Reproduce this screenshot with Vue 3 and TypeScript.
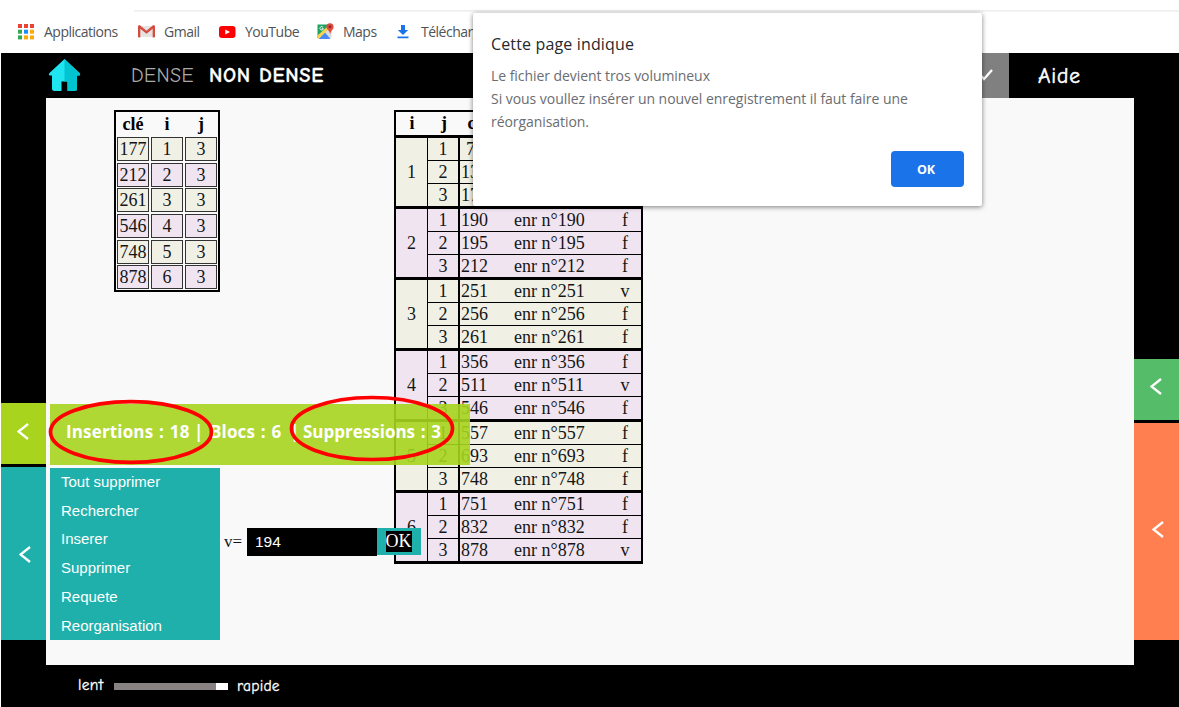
<script setup lang="ts">
interface IndexRow { key: number; block: number; slot: number }
interface RecordRow { key: number; deleted: boolean }

const indexRows: IndexRow[] = [177, 212, 261, 546, 748, 878].map((key, n) => ({ key, block: n + 1, slot: 3 }))

const deletedKeys = [251, 511, 878]
const blocks: RecordRow[][] = [
  [75, 130, 177],
  [190, 195, 212],
  [251, 256, 261],
  [356, 511, 546],
  [557, 693, 748],
  [751, 832, 878],
].map((keys) => keys.map((key) => ({ key, deleted: deletedKeys.includes(key) })))

const actions: string[] = ['Tout supprimer', 'Rechercher', 'Inserer', 'Supprimer', 'Requete', 'Reorganisation']
const appColors: string[] = ['#ea4335', '#ea4335', '#ea4335', '#34a853', '#1a8cff', '#fbab05', '#34a853', '#fbab05', '#fbab05']
</script>

<template>
  <div class="window">
    <header class="bookmarks">
      <div class="bm apps">
        <svg width="16" height="16" viewBox="0 0 16 16">
          <rect v-for="(c, n) in appColors" :key="n" :x="(n % 3) * 6" :y="Math.floor(n / 3) * 5.7" width="4" height="4" :fill="c" />
        </svg>
        <span>Applications</span>
      </div>
      <div class="bm gmail">
        <svg width="17" height="13" viewBox="0 0 17 13">
          <path d="M1 1h15v11H1z" fill="#e6e4e3" />
          <path d="M0 1.5Q0 0 1.6 0L8.5 5.7 15.4 0Q17 0 17 1.5V11.4Q17 12.4 16 12.4H14.7V3.8L8.5 8.8 2.3 3.8V12.4H1Q0 12.4 0 11.4z" fill="#d54b3d" />
        </svg>
        <span>Gmail</span>
      </div>
      <div class="bm youtube">
        <svg width="17" height="12" viewBox="0 0 17 12">
          <rect width="16.5" height="12" rx="3" fill="#f00" />
          <path d="M6.3 3.4L11 6 6.3 8.6z" fill="#fff" />
        </svg>
        <span>YouTube</span>
      </div>
      <div class="bm maps">
        <svg width="17" height="17" viewBox="0 0 17 17">
          <path d="M1 2h13v13H1z" fill="#d9dcdf" />
          <path d="M.5 1.5H11L10 7 .5 15.5z" fill="#1fa463" />
          <path d="M1.500 16L8 9.500l5.500 6.500z" fill="#4a89f3" />
          <path d="M.5 12.500L10 4l1.600 2L2 15.500H.5z" fill="#fcd24c" />
          <path d="M9 9l5.500 6V6z" fill="#d9dcdf" />
          <path d="M9.400 3.800a3.600 3.600 0 0 1 7.200 0c0 2.500-2.600 3.600-3.400 7.400C12.400 7.400 9.400 6.300 9.400 3.800z" fill="#e04a3f" />
          <circle cx="13" cy="3.700" r="1.300" fill="#8c1d18" />
          <path d="M6 4.300a1.700 1.700 0 1 0 .3 1.400H4.800" fill="none" stroke="#fff" stroke-width=".9" />
        </svg>
        <span>Maps</span>
      </div>
      <div class="bm download">
        <svg width="12" height="14" viewBox="0 0 12 14">
          <path d="M4 0h4v5h3.200L6 10 .8 5H4zM.5 11.500h11v1.700H.5z" fill="#1a73e8" />
        </svg>
        <span>Télécharger</span>
      </div>
    </header>

    <div class="app">
      <nav class="topbar">
        <svg class="home" width="33" height="33" viewBox="0 0 33 33">
          <path d="M16.500 0L31.500 14Q33 16 31 16.500H29V29.500Q29 32 26.500 32H19.500V22.500H13.500V32H6.500Q4 32 4 29.500V16.500H2Q0 16 1.500 14z" fill="#1fe5f0" />
          <path d="M16.500 0L31.500 14Q33 16 31 16.500H29V29.500Q29 32 26.500 32H19.500V22.500H16.500z" fill="#00c5d0" />
        </svg>
        <span class="dense">DENSE</span>
        <span class="non-dense">NON DENSE</span>
        <span class="toggle">
          <svg width="18" height="12" viewBox="0 0 18 12"><path d="M1 1l8 9 8-9" /></svg>
        </span>
        <span class="help">Aide</span>
      </nav>

      <div class="middle">
        <aside class="rail left">
          <div class="tab lime"><svg width="12" height="17" viewBox="0 0 12 17"><path d="M11 1L1.500 8.500 11 16" /></svg></div>
          <div class="tab teal"><svg width="12" height="17" viewBox="0 0 12 17"><path d="M11 1L1.500 8.500 11 16" /></svg></div>
        </aside>

        <main class="canvas">
          <div class="index-table">
            <b>clé</b><b>i</b><b>j</b>
            <template v-for="r in indexRows" :key="r.key">
              <span class="cell" :class="{ alt: r.block % 2 === 0 }">{{ r.key }}</span>
              <span class="cell" :class="{ alt: r.block % 2 === 0 }">{{ r.block }}</span>
              <span class="cell" :class="{ alt: r.block % 2 === 0 }">{{ r.slot }}</span>
            </template>
          </div>

          <div class="data-table">
            <div class="data-head"><b>i</b><b>j</b><b class="key-head">clé</b></div>
            <div v-for="(rows, n) in blocks" :key="n" class="block" :class="{ alt: n % 2 === 1 }">
              <div class="block-no">{{ n + 1 }}</div>
              <div class="records">
                <div v-for="(r, k) in rows" :key="r.key" class="record">
                  <span class="slot">{{ k + 1 }}</span>
                  <span class="key" :class="{ short: r.key < 100 }">{{ r.key }}</span>
                  <span class="info">enr n°{{ r.key }}</span>
                  <span class="flag">{{ r.deleted ? 'v' : 'f' }}</span>
                </div>
              </div>
            </div>
          </div>

          <div class="stats">
            <span class="s-ins">Insertions : 18</span><span class="s-bar">|</span>
            <span class="s-blocs">Blocs : 6</span><span class="s-bar2">|</span>
            <span class="s-sup">Suppressions : 3</span>
          </div>

          <div class="actions">
            <ul>
              <li v-for="a in actions" :key="a">{{ a }}</li>
            </ul>
            <div class="prompt">
              <span class="v">v=</span><span class="field">194</span><span class="go"><span>OK</span></span>
            </div>
          </div>
        </main>

        <aside class="rail right">
          <div class="tab green"><svg width="12" height="17" viewBox="0 0 12 17"><path d="M11 1L1.500 8.500 11 16" /></svg></div>
          <div class="tab coral"><svg width="12" height="17" viewBox="0 0 12 17"><path d="M11 1L1.500 8.500 11 16" /></svg></div>
        </aside>
      </div>

      <footer class="speed">
        <span class="slow">lent</span>
        <span class="track"><i /></span>
        <span class="fast">rapide</span>
      </footer>
    </div>

    <svg class="marks" width="420" height="80" viewBox="0 0 420 80">
      <ellipse cx="91" cy="42" rx="80.500" ry="30.300" />
      <ellipse cx="332" cy="38.500" rx="80.500" ry="31" />
    </svg>

    <section class="dialog">
      <h1>Cette page indique</h1>
      <p class="l1">Le fichier devient tros volumineux</p>
      <p class="l2">Si vous voullez insérer un nouvel enregistrement il faut faire une</p>
      <p class="l3">réorganisation.</p>
      <button>OK</button>
    </section>
  </div>
</template>

<style>
body { margin: 0; overflow: hidden; background: #fff; }
</style>

<style scoped>
* { box-sizing: border-box; }
.window { position: relative; width: 1179px; height: 707px; overflow: hidden; display: flex; flex-direction: column; font-family: "Segoe UI", "Open Sans", "Noto Sans", sans-serif; }
span, b, li, h1, p { white-space: nowrap; }
svg { display: block; flex: none; }

.bookmarks { height: 53px; flex: none; display: flex; padding: 11px 0 0 18px; background: linear-gradient(#ececee, #f6f6f6) 134px 10px / 100% 2px no-repeat #fff; color: #505357; font-size: 14px; letter-spacing: -.5px; }
.bm { display: flex; align-items: center; height: 41px; flex: none; }
.apps { width: 120px; gap: 10px; }
.gmail { width: 81px; gap: 9px; }
.youtube { width: 98px; gap: 9px; }
.maps { width: 80px; gap: 9px; }
.download { gap: 12px; }

.app { flex: 1; margin-left: 1px; background: #000; display: flex; flex-direction: column; }
.topbar { height: 45px; flex: none; display: flex; align-items: center; padding-left: 47px; color: #fff; font-family: "Comic Sans MS", "Comic Neue", Lato, "Open Sans", sans-serif; font-size: 20px; }
.dense { width: 78px; margin-left: 50px; color: #aaa; letter-spacing: .4px; }
.non-dense { width: 734px; font-weight: 700; letter-spacing: .7px; font-size: 20.500px; -webkit-text-stroke: .3px #fff; }
.toggle { width: 66px; height: 45px; background: #808080; display: flex; align-items: center; justify-content: center; padding: 0 0 1px 16px; }
.toggle path, .tab path { fill: none; stroke: #fff; stroke-width: 2.300; }
.help { margin-left: 29px; font-size: 21.500px; letter-spacing: .8px; -webkit-text-stroke: .5px #fff; }

.middle { height: 567px; flex: none; display: flex; }
.rail { display: flex; flex-direction: column; }
.left { width: 45px; padding-top: 305px; gap: 3px; }
.right { width: 45px; padding-top: 261px; gap: 3px; }
.tab { display: flex; align-items: center; justify-content: center; }
.lime { height: 61px; background: #a9d41e; padding: 0 1px 5px 0; }
.teal { height: 173px; background: #20b0ab; padding: 1px 0 0 2px; }
.green { height: 61px; background: #55bd69; padding: 0 1px 6px 0; }
.coral { height: 217px; background: #ff7f50; padding: 0 0 4px 3px; }

.canvas { width: 1088px; flex: none; background: #f9f9f9; position: relative; font-family: "Liberation Serif", serif; font-size: 18px; color: #151515; padding: 12px 0 0 68px; }
.index-table { width: 106px; height: 182px; border: 2px solid #000; display: grid; grid-template-columns: repeat(3, 32px); grid-template-rows: 22.300px; grid-auto-rows: 24px; column-gap: 2px; row-gap: 1.700px; padding: 1px; line-height: 22px; text-align: center; }
.index-table b { line-height: 23px; color: #000; }
.cell { border: 1px solid #333; background: #f0f0e4; }
.alt, .cell.alt { background: #f0e4f0; }

.data-table { position: absolute; left: 348px; top: 12px; width: 249px; border: 2px solid #000; border-bottom: 0; line-height: 22px; }
.data-head { height: 26px; border-bottom: 3px solid #000; display: flex; text-align: center; color: #000; }
.data-head b { width: 32px; }
.data-head .key-head { width: 36px; }
.block { height: 71px; border-bottom: 3px solid #000; display: flex; background: #f0f0e4; }
.block.alt { background: #f0e4f0; }
.block-no { width: 32px; border-right: 1.500px solid #000; line-height: 69px; text-align: center; }
.records { flex: 1; display: flex; flex-direction: column; }
.record { flex: 1; display: flex; }
.record + .record { border-top: 1px solid #000; }
.slot { width: 32px; border-right: 2px solid #000; text-align: center; }
.key { width: 54px; padding-left: 1px; }
.key.short { padding-left: 6px; }
.info { width: 107px; }
.flag { width: 10px; text-align: center; margin-left: -1px; }

.stats { position: absolute; left: 4px; top: 306px; width: 420px; height: 61px; background: rgba(166, 212, 30, .9); color: #fff; display: flex; align-items: center; padding: 0 0 6px 16px; font: 700 17px "Trebuchet MS", "Open Sans", sans-serif; }
.s-ins { width: 128px; letter-spacing: .15px; word-spacing: 1.200px; }
.s-bar { width: 16px; }
.s-blocs { width: 80px; letter-spacing: .15px; word-spacing: 1.200px; }
.s-bar2 { width: 13px; }
.s-sup { word-spacing: 1.200px; }

.actions { position: absolute; left: 4px; top: 370px; display: flex; }
ul { list-style: none; margin: 0; width: 170px; height: 172px; background: #20b0ab; color: #fff; padding: 0 0 0 11px; font: 15px/28.700px "Liberation Sans", Arial, sans-serif; }
.prompt { display: flex; align-items: center; height: 28px; margin-top: 60px; }
.v { width: 27px; padding: 0 0 1px 4px; font-size: 17px; }
.field { width: 130px; height: 28px; background: #000; color: #fff; font: 15.500px/28px "Liberation Sans", Arial, sans-serif; padding-left: 8px; }
.go { width: 44px; height: 27px; background: #20b0ab; display: flex; align-items: center; justify-content: center; margin-top: -1px; padding-right: 1px; }
.go span { background: #000; color: #fff; font-size: 18px; line-height: 21px; }

.speed { flex: 1; display: flex; align-items: center; color: #fff; font-family: "Comic Sans MS", "Comic Neue", Lato, "Open Sans", sans-serif; font-size: 15.500px; padding-left: 77px; -webkit-text-stroke: .3px #fff; }
.slow { width: 36px; letter-spacing: .3px; padding-bottom: 2px; }
.fast { letter-spacing: .2px; }
.track { width: 114px; height: 7px; background: #898282; display: flex; justify-content: flex-end; margin-right: 9px; }
.track i { width: 12px; background: #fff; }

.marks { position: absolute; left: 40px; top: 390px; fill: none; stroke: #f00; stroke-width: 3.700; }

.dialog { position: absolute; left: 473px; top: 13px; width: 508.500px; height: 192.500px; background: #fff; border-radius: 2px; box-shadow: 0 1px 5px rgba(0, 0, 0, .5); padding: 20px 18px 0 18px; color: #6a6d71; font-size: 14px; letter-spacing: -.06px; }
h1 { margin: 0; font-size: 16px; line-height: 23px; font-weight: 400; color: #26282c; letter-spacing: .15px; }
p { margin: 0; line-height: 22.800px; }
.l1 { margin-top: 9px; }
.l2 { letter-spacing: -.04px; }
button { display: block; margin: 18px 0 0 auto; width: 73px; height: 36px; border: 0; border-radius: 4px; background: #1a73e8; color: #fff; font: 700 12.500px "Open Sans", sans-serif; padding: 0 2px 0 0; }
</style>
